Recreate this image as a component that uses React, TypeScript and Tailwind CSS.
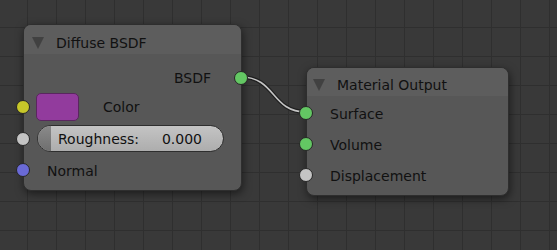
import React from "react";

function Socket({ color, side }: { color: string; side: "left" | "right" }) {
  return (
    <span
      className={
        "absolute top-1/2 -translate-y-1/2 w-[14px] h-[14px] rounded-full border border-[#262626] " +
        (side === "left" ? "left-[-8px] " : "right-[-7px] ") +
        color
      }
    />
  );
}

function Tri() {
  return (
    <svg width="12" height="12" viewBox="0 0 12 12" className="shrink-0">
      <polygon points="0,0 12,0 6,12" fill="#414141" />
    </svg>
  );
}

export default function App() {
  return (
    <div className="relative w-[557px] h-[250px] overflow-hidden bg-[#393939] bg-[linear-gradient(to_right,#2f2f2f_1px,transparent_1px),linear-gradient(to_bottom,#2f2f2f_1px,transparent_1px)] [background-size:29px_29px] [background-position:-2px_-2px] font-['DejaVu_Sans',sans-serif] text-[14px] leading-none text-[#111]">
      <svg className="absolute inset-0" width="557" height="250">
        <path d="M241 77 C 276 77, 271 112, 306 112" stroke="#1f1f1f" strokeWidth="4" fill="none" />
        <path d="M241 77 C 276 77, 271 112, 306 112" stroke="#c4c4c4" strokeWidth="1.6" fill="none" />
      </svg>

      {/* Diffuse BSDF */}
      <div className="absolute left-[23px] top-[24px] w-[219px] rounded-[8px] border border-[#2e2e2e] bg-[#575757] shadow-[1px_3px_9px_rgba(0,0,0,0.5)]">
        <div className="h-[29px] rounded-t-[7px] bg-[#5d5d5d] flex items-center pt-[7px] pl-[8px] gap-[12px]">
          <Tri />
          <span>Diffuse BSDF</span>
        </div>
        <div className="pt-[9px] pb-[7px]">
          <div className="relative h-[29px] flex items-center justify-end pr-[30px]">
            <span>BSDF</span>
            <Socket side="right" color="bg-[#63c763]" />
          </div>
          <div className="relative h-[29px] flex items-center">
            <Socket side="left" color="bg-[#c7c729]" />
            <div className="ml-[12px] w-[43px] h-[28px] rounded-[5px] bg-[#923b9d] border border-[#5a265f]" />
            <span className="ml-[24px]">Color</span>
          </div>
          <div className="relative mt-[4px] h-[27px] flex items-center">
            <Socket side="left" color="bg-[#c4c4c4]" />
            <div className="relative ml-[13px] w-[187px] h-[27px] rounded-full border border-[#2e2e2e] bg-[linear-gradient(to_bottom,#c4c4c4,#adadad)] overflow-hidden flex items-center justify-between pl-[20px] pr-[21px]">
              <div className="absolute left-0 top-0 bottom-0 w-[13px] bg-[linear-gradient(to_bottom,#8a8a8a,#6f6f6f)]" />
              <span className="relative">Roughness:</span>
              <span className="relative">0.000</span>
            </div>
          </div>
          <div className="relative mt-[5px] h-[26px] flex items-center pl-[23px]">
            <Socket side="left" color="bg-[#6a6ad6]" />
            <span className="translate-y-[1px]">Normal</span>
          </div>
        </div>
      </div>

      {/* Material Output */}
      <div className="absolute left-[306px] top-[67px] w-[203px] rounded-[8px] border border-[#2e2e2e] bg-[#575757] shadow-[1px_3px_9px_rgba(0,0,0,0.5)]">
        <div className="h-[28px] rounded-t-[7px] bg-[#5d5d5d] flex items-center pt-[5px] pl-[6px] gap-[12px]">
          <Tri />
          <span>Material Output</span>
        </div>
        <div className="pt-[1px] pb-[5px]">
          <div className="relative h-[31px] flex items-center pl-[23px]">
            <Socket side="left" color="bg-[#63c763]" />
            <span className="translate-y-[1px]">Surface</span>
          </div>
          <div className="relative h-[31px] flex items-center pl-[23px]">
            <Socket side="left" color="bg-[#63c763]" />
            <span className="translate-y-[1px]">Volume</span>
          </div>
          <div className="relative h-[31px] flex items-center pl-[23px]">
            <Socket side="left" color="bg-[#c4c4c4]" />
            <span className="translate-y-[1px]">Displacement</span>
          </div>
        </div>
      </div>
    </div>
  );
}
